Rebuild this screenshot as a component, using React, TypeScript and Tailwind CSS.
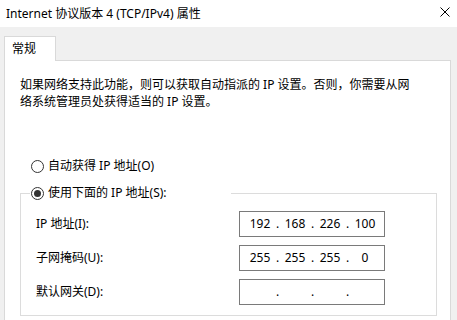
import React from "react";

const rows = [
  { label: "IP 地址(I):", parts: ["192", "168", "226", "100"] },
  { label: "子网掩码(U):", parts: ["255", "255", "255", "0"] },
  { label: "默认网关(D):", parts: ["", "", "", ""] },
];

function Radio({ checked }: { checked?: boolean }) {
  return (
    <span className="w-[13px] h-[13px] rounded-full border border-[#333333] bg-white flex items-center justify-center shrink-0">
      {checked && <span className="w-[7px] h-[7px] rounded-full bg-[#333333]" />}
    </span>
  );
}

function IpBox({ parts }: { parts: string[] }) {
  return (
    <div className="w-[146px] h-[26px] border border-[#7a7a7a] bg-white flex items-center pl-[6px]">
      {parts.map((p, i) => (
        <React.Fragment key={i}>
          <span className="w-[28px] text-center">{p}</span>
          {i < 3 && <span className="w-[7px] text-center">.</span>}
        </React.Fragment>
      ))}
    </div>
  );
}

export default function App() {
  return (
    <div className="w-[457px] h-[320px] overflow-hidden bg-[#f0f0f0] text-[12px] text-black font-['Noto_Sans','Noto_Sans_CJK_SC',sans-serif]">
      {/* title bar */}
      <div className="h-[27px] bg-white flex items-center justify-between pl-[6px] pr-[7px]">
        <span>Internet 协议版本 4 (TCP/IPv4) 属性</span>
        <svg width="10" height="10" viewBox="0 0 10 10" className="mt-[-3px]">
          <path d="M0.5 0.5 L9.5 9.5 M9.5 0.5 L0.5 9.5" stroke="#000" strokeWidth="1" fill="none" />
        </svg>
      </div>

      <div className="pt-[9px] pl-[4px] pr-[6px]">
        <div className="relative z-10 -mb-px w-[52px] h-[25px] border border-b-0 border-[#d9d9d9] bg-white pl-[7px] flex items-center">
          常规
        </div>
        <div className="h-[300px] border border-[#d9d9d9] bg-white pt-[15px] pl-[15px]">
          <p className="leading-[17px] whitespace-nowrap">
            如果网络支持此功能，则可以获取自动指派的 IP 设置。否则，你需要从网
            <br />
            络系统管理员处获得适当的 IP 设置。
          </p>

          <div className="mt-[47px] ml-[11px] h-[18px] flex items-center gap-[4px]">
            <Radio />
            <span>自动获得 IP 地址(O)</span>
          </div>

          <fieldset className="mt-[9px] w-[417px] border border-[#dcdcdc] pb-[10px]">
            <legend className="ml-[9px] w-[201px] h-[18px] pl-[1px]">
              <div className="h-[18px] flex items-center gap-[4px]">
                <Radio checked />
                <span>使用下面的 IP 地址(S):</span>
              </div>
            </legend>
            <div className="pt-[9px] pl-[15px] flex flex-col gap-[8px]">
              {rows.map((r) => (
                <div key={r.label} className="flex items-center">
                  <span className="w-[203px]">{r.label}</span>
                  <IpBox parts={r.parts} />
                </div>
              ))}
            </div>
          </fieldset>
        </div>
      </div>
    </div>
  );
}
